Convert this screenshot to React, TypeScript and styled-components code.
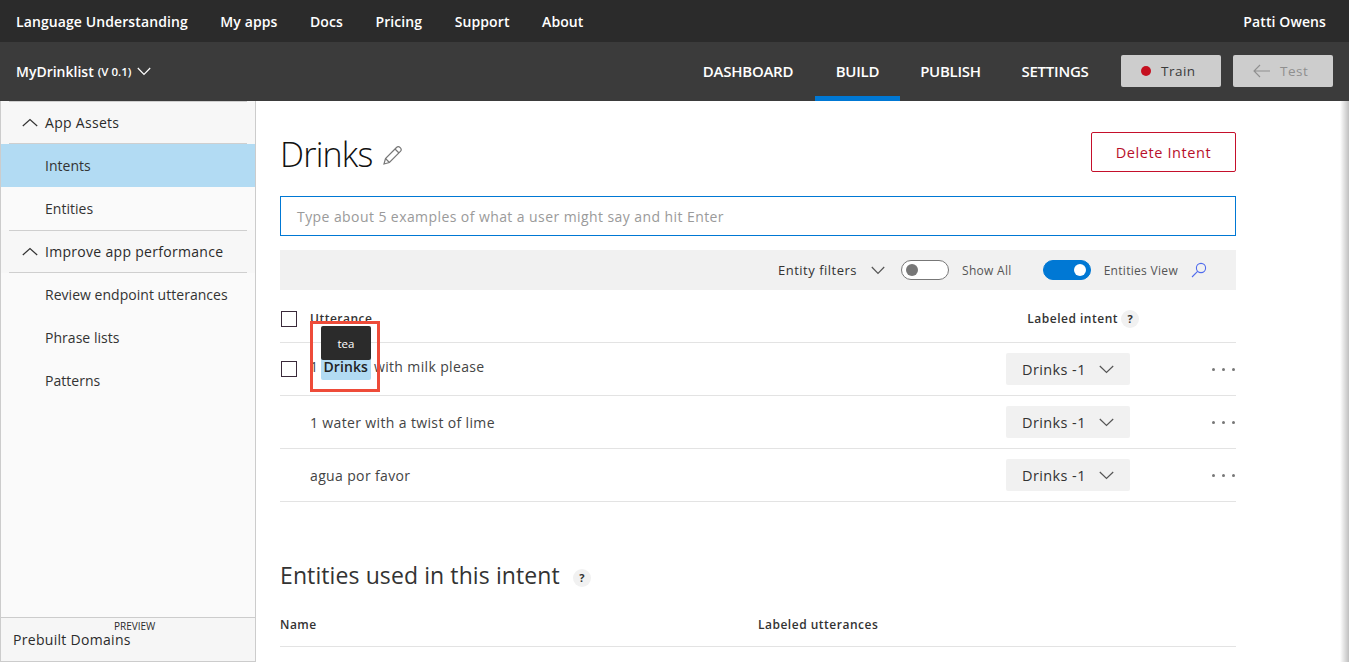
import React from "react";
import styled, { createGlobalStyle } from "styled-components";

const GlobalStyle = createGlobalStyle`
  html, body {
    margin: 0;
    height: 100%;
    overflow: hidden;
    background: white;
    font-family: "Open Sans", "Noto Sans", sans-serif;
  }
  * { box-sizing: border-box; }
`;

const Page = styled.div`
  width: 1349px;
  height: 662px;
  display: flex;
  flex-direction: column;
  overflow: hidden;
`;

const TopBar = styled.div`
  height: 42px;
  flex: none;
  display: flex;
  align-items: center;
  padding: 0 23px 0 16px;
  background-color: #2b2b2b;
  color: white;
  font-size: 14px;
  font-weight: 600;
  letter-spacing: 0.1px;
`;

const TopLinks = styled.div`
  display: flex;
  gap: 32.5px;
  flex: 1;
`;

const SubBar = styled.div`
  height: 59px;
  flex: none;
  display: flex;
  align-items: center;
  padding: 0 16px;
  background-color: #3b3b3b;
  color: white;
`;

const AppName = styled.div`
  display: flex;
  align-items: center;
  flex: 1;
  font-size: 14px;
  font-weight: 600;

  small {
    font-size: 11.5px;
    margin-left: 4px;
  }

  svg {
    margin-left: 6px;
  }
`;

const Tabs = styled.div`
  display: flex;
  height: 100%;
`;

const Tab = styled.div<{ $active?: boolean; $width: number }>`
  width: ${({ $width }) => $width}px;
  display: flex;
  align-items: center;
  justify-content: center;
  font-size: 15px;
  font-weight: 600;
  letter-spacing: -0.25px;
  border-bottom: 5px solid ${({ $active }) => ($active ? "#0078d4" : "transparent")};
  padding-top: 3px;
`;

const ActionButton = styled.div<{ $disabled?: boolean }>`
  width: 100px;
  height: 32px;
  margin: 0 0 2px 12px;
  padding-left: 20px;
  border-radius: 2px;
  display: flex;
  align-items: center;
  gap: 10px;
  background-color: #cdcdcd;
  color: ${({ $disabled }) => ($disabled ? "#8f8f8f" : "#3b3b3b")};
  font-size: 13.5px;
  font-weight: 500;
  letter-spacing: 0.5px;
`;

const RedDot = styled.span`
  width: 10px;
  height: 10px;
  border-radius: 50%;
  background-color: #c50f1f;
`;

const Body = styled.div`
  flex: 1;
  display: flex;
  min-height: 0;
`;

const Sidebar = styled.nav`
  width: 256px;
  flex: none;
  display: flex;
  flex-direction: column;
  background-color: #fafafa;
  border-left: 1px solid #cccccc;
  border-right: 1px solid #cccccc;
  border-bottom: 1px solid #cccccc;
  font-size: 14px;
  color: #333333;
`;

const SideHeaderBand = styled.div`
  padding: 0 8px;
  background-color: #f7f7f7;
`;

const SideHeader = styled.div`
  height: 43px;
  padding-left: 13px;
  display: flex;
  align-items: center;
  gap: 7px;
  font-weight: 500;
  letter-spacing: 0.3px;
  border-top: 1px solid #cfcfcf;
  border-bottom: 1px solid #cfcfcf;
  color: #2b2b2b;
`;

const SideItem = styled.div<{ $active?: boolean }>`
  height: 43px;
  padding-left: 44px;
  display: flex;
  align-items: center;
  letter-spacing: 0.03px;
  background-color: ${({ $active }) => ($active ? "#b2dbf3" : "transparent")};
`;

const SideFooter = styled.div`
  margin-top: auto;
  height: 44px;
  padding: 4px 0 0 12px;
  border-top: 1px solid #cccccc;
  background-color: #f6f6f6;
  font-size: 14px;
  letter-spacing: 0.3px;
  color: #2b2b2b;
  display: flex;
  flex-direction: column;
`;

const PreviewTag = styled.span`
  font-size: 10px;
  line-height: 8px;
  letter-spacing: 0;
  padding-left: 101px;
`;

const Main = styled.main`
  flex: 1;
  position: relative;
  padding: 31px 113px 0 24px;
  overflow: hidden;

  &::after {
    content: "";
    position: absolute;
    top: 0;
    right: 0;
    bottom: 0;
    width: 9px;
    background: linear-gradient(to right, rgba(0, 0, 0, 0), rgba(0, 0, 0, 0.25));
  }
`;

const TitleRow = styled.div`
  display: flex;
  align-items: center;
  height: 40px;
  color: #111111;

  svg {
    margin-top: 5px;
  }
`;

const Title = styled.h1`
  margin: 4px 10px 0 0;
  font-size: 34px;
  font-weight: 300;
  letter-spacing: -0.8px;
`;

const DeleteButton = styled.div`
  margin-left: auto;
  width: 145px;
  height: 40px;
  display: flex;
  align-items: center;
  justify-content: center;
  border: 1px solid #c50f2b;
  border-radius: 2px;
  color: #b8102b;
  font-size: 14.5px;
  letter-spacing: 0.6px;
`;

const SearchBox = styled.div`
  margin-top: 24px;
  height: 40px;
  display: flex;
  align-items: center;
  padding-left: 16px;
  border: 1px solid #0078d4;
  color: #9a9a9a;
  font-size: 14px;
  letter-spacing: 0.42px;
`;

const FilterBar = styled.div`
  margin-top: 14px;
  height: 40px;
  display: flex;
  align-items: center;
  padding-left: 498px;
  background-color: #f1f1f1;
  color: #444444;
  font-size: 12.5px;
`;

const FilterLabel = styled.span<{ $gap: number; $small?: boolean }>`
  margin-right: ${({ $gap }) => $gap}px;
  font-size: ${({ $small }) => ($small ? "12px" : "13px")};
  letter-spacing: ${({ $small }) => ($small ? "0.3px" : "0.5px")};
  color: ${({ $small }) => ($small ? "#555555" : "#333333")};
  white-space: nowrap;
`;

const FilterChevron = styled.span`
  display: flex;
  margin-right: 16px;
`;

const Toggle = styled.div<{ $on?: boolean }>`
  width: 48px;
  height: 20px;
  border-radius: 10px;
  margin-right: 13px;
  display: flex;
  align-items: center;
  padding: 0 4px;
  justify-content: ${({ $on }) => ($on ? "flex-end" : "flex-start")};
  background-color: ${({ $on }) => ($on ? "#0078d4" : "white")};
  border: 1px solid ${({ $on }) => ($on ? "#0078d4" : "#777777")};

  &::after {
    content: "";
    width: 12px;
    height: 12px;
    border-radius: 50%;
    background-color: ${({ $on }) => ($on ? "white" : "#777777")};
  }
`;

const Table = styled.div`
  position: relative;
`;

const HeaderRow = styled.div`
  height: 53px;
  padding-top: 5px;
  display: flex;
  align-items: center;
  border-bottom: 1px solid #e3e3e3;
  font-size: 12px;
  font-weight: 600;
  letter-spacing: 0.5px;
  color: #333333;
`;

const Row = styled.div`
  height: 53px;
  display: flex;
  align-items: center;
  border-bottom: 1px solid #e3e3e3;
  font-size: 14px;
  color: #444444;
  letter-spacing: 0.36px;
`;

const CheckBox = styled.span`
  width: 16px;
  height: 16px;
  flex: none;
  border: 1px solid #3a2a3a;
  margin: 0 13px 0 1px;
`;

const CheckSlot = styled.span`
  width: 30px;
  flex: none;
`;

const UtteranceText = styled.span<{ $raised?: boolean }>`
  flex: 1;
  white-space: pre;
  margin-bottom: ${({ $raised }) => ($raised ? "1px" : "0")};
`;

const Highlight = styled.span`
  display: inline-block;
  padding: 0 3px 4px 2px;
  margin: 0 -1px 0 -1px;
  background-color: #b2dbf3;
  border-radius: 2px;
  color: #222222;
  font-weight: 600;
  letter-spacing: 0.1px;
`;

const LabeledHead = styled.span`
  display: flex;
  align-items: center;
  gap: 3px;
  margin-right: 97px;
`;

const HelpDot = styled.span`
  width: 18px;
  height: 18px;
  flex: none;
  border-radius: 50%;
  background-color: #f1f1f1;
  display: inline-flex;
  align-items: center;
  justify-content: center;
  font-size: 11px;
  font-weight: 700;
  letter-spacing: 0;
  color: #333333;
`;

const SectionHelp = styled(HelpDot)`
  margin-top: 5px;
`;

const IntentSelect = styled.div`
  width: 124px;
  height: 32px;
  flex: none;
  margin-right: 82px;
  padding: 0 16px;
  display: flex;
  align-items: center;
  justify-content: space-between;
  border-radius: 2px;
  background-color: #f1f1f1;
  color: #333333;
  font-size: 14.5px;
  letter-spacing: 0.4px;
`;

const Dots = styled.span`
  display: flex;
  gap: 7px;
  width: 24px;
  flex: none;

  i {
    width: 3px;
    height: 3px;
    flex: none;
    border-radius: 50%;
    background-color: #777777;
  }
`;

const Tooltip = styled.div`
  position: absolute;
  left: 41px;
  top: 36px;
  width: 50px;
  height: 34px;
  border-radius: 2px;
  display: flex;
  align-items: center;
  justify-content: center;
  background-color: #2b2b2b;
  color: white;
  font-size: 11.5px;
`;

const Callout = styled.div`
  position: absolute;
  left: 30px;
  top: 31px;
  width: 70px;
  height: 71px;
  border: 3px solid #ee4b39;
`;

const SectionTitle = styled.h2`
  margin: 56px 0 0;
  display: flex;
  align-items: center;
  gap: 13px;
  height: 34px;
  font-size: 23px;
  font-weight: 400;
  color: #333333;
  letter-spacing: 0.1px;
`;

const EntitiesHead = styled.div`
  margin-top: 11px;
  height: 44px;
  display: flex;
  align-items: center;
  border-bottom: 1px solid #e3e3e3;
  font-size: 12px;
  font-weight: 600;
  letter-spacing: 0.5px;
  color: #333333;
`;

const NameCol = styled.span`
  width: 478px;
`;

const Chevron = ({ color = "currentColor", up = false, width = 14 }: { color?: string; up?: boolean; width?: number }) => (
  <svg width={width} height="9" viewBox={`0 0 ${width} 9`} fill="none" stroke={color} strokeWidth="1.2">
    <path
      d={up ? `M0.8 8L${width / 2} 1.5L${width - 0.8} 8` : `M0.8 1L${width / 2} 7.5L${width - 0.8} 1`}
    />
  </svg>
);

const Pencil = () => (
  <svg width="20" height="20" viewBox="0 0 20 20" fill="none" stroke="#777777" strokeWidth="1.2">
    <path d="M1 19L2.5 13.5L13.5 2.5C14.5 1.5 16 1.5 17.2 2.7C18.4 3.9 18.4 5.4 17.4 6.4L6.4 17.5Z" />
    <path d="M12 4L16 8M2.5 13.5L6.4 17.5" />
  </svg>
);

const Search = () => (
  <svg width="16" height="16" viewBox="0 0 16 16" fill="none" stroke="#4f6bed" strokeWidth="1.1">
    <circle cx="10" cy="6" r="4.6" />
    <path d="M6.6 9.4L1 15" />
  </svg>
);

const BackArrow = () => (
  <svg width="17" height="14" viewBox="0 0 17 14" fill="none" stroke="#8f8f8f" strokeWidth="1.1">
    <path d="M7 1L1 7L7 13M1 7H17" />
  </svg>
);

const utterances = ["1 water with a twist of lime", "agua por favor"];

const RowEnd = () => (
  <>
    <IntentSelect>
      Drinks -1 <Chevron width={15} color="#555555" />
    </IntentSelect>
    <Dots>
      <i />
      <i />
      <i />
    </Dots>
  </>
);

const App = () => (
  <Page>
    <GlobalStyle />
    <TopBar>
      <TopLinks>
        <span>Language Understanding</span>
        <span>My apps</span>
        <span>Docs</span>
        <span>Pricing</span>
        <span>Support</span>
        <span>About</span>
      </TopLinks>
      <span>Patti Owens</span>
    </TopBar>
    <SubBar>
      <AppName>
        MyDrinklist <small>(V 0.1)</small>
        <Chevron />
      </AppName>
      <Tabs>
        <Tab $width={134}>DASHBOARD</Tab>
        <Tab $width={85} $active>
          BUILD
        </Tab>
        <Tab $width={101}>PUBLISH</Tab>
        <Tab $width={108}>SETTINGS</Tab>
      </Tabs>
      <ActionButton>
        <RedDot />
        Train
      </ActionButton>
      <ActionButton $disabled>
        <BackArrow />
        Test
      </ActionButton>
    </SubBar>
    <Body>
      <Sidebar>
        <SideHeaderBand>
          <SideHeader>
            <Chevron up width={16} color="#333333" />
            App Assets
          </SideHeader>
        </SideHeaderBand>
        <SideItem $active>Intents</SideItem>
        <SideItem>Entities</SideItem>
        <SideHeaderBand>
          <SideHeader>
            <Chevron up width={16} color="#333333" />
            Improve app performance
          </SideHeader>
        </SideHeaderBand>
        <SideItem>Review endpoint utterances</SideItem>
        <SideItem>Phrase lists</SideItem>
        <SideItem>Patterns</SideItem>
        <SideFooter>
          <PreviewTag>PREVIEW</PreviewTag>
          Prebuilt Domains
        </SideFooter>
      </Sidebar>
      <Main>
        <TitleRow>
          <Title>Drinks</Title>
          <Pencil />
          <DeleteButton>Delete Intent</DeleteButton>
        </TitleRow>
        <SearchBox>Type about 5 examples of what a user might say and hit Enter</SearchBox>
        <FilterBar>
          <FilterLabel $gap={14}>Entity filters</FilterLabel>
          <FilterChevron>
            <Chevron color="#555555" />
          </FilterChevron>
          <Toggle />
          <FilterLabel $gap={31} $small>
            Show All
          </FilterLabel>
          <Toggle $on />
          <FilterLabel $gap={13} $small>
            Entities View
          </FilterLabel>
          <Search />
        </FilterBar>
        <Table>
          <HeaderRow>
            <CheckBox />
            <UtteranceText>Utterance</UtteranceText>
            <LabeledHead>
              Labeled intent <HelpDot>?</HelpDot>
            </LabeledHead>
          </HeaderRow>
          <Row>
            <CheckBox />
            <UtteranceText $raised>
              1 <Highlight>Drinks</Highlight> with milk please
            </UtteranceText>
            <RowEnd />
          </Row>
          {utterances.map((text) => (
            <Row key={text}>
              <CheckSlot />
              <UtteranceText>{text}</UtteranceText>
              <RowEnd />
            </Row>
          ))}
          <Tooltip>tea</Tooltip>
          <Callout />
        </Table>
        <SectionTitle>
          Entities used in this intent <SectionHelp>?</SectionHelp>
        </SectionTitle>
        <EntitiesHead>
          <NameCol>Name</NameCol>
          Labeled utterances
        </EntitiesHead>
      </Main>
    </Body>
  </Page>
);

export default App;
